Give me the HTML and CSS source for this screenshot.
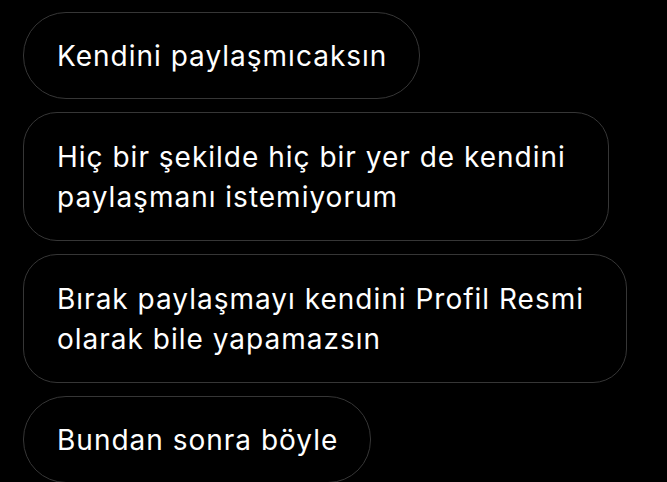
FILE: index.html
```html
<!DOCTYPE html>
<html lang="tr">
<head>
<meta charset="utf-8">
<link rel="stylesheet" href="styles.css">
</head>
<body>
<div class="thread">
  <div class="bubble pill">Kendini paylaşmıcaksın</div>
  <div class="bubble multi">Hiç bir şekilde hiç bir yer de kendini<br>paylaşmanı istemiyorum</div>
  <div class="bubble multi">Bırak paylaşmayı kendini Profil Resmi<br>olarak bile yapamazsın</div>
  <div class="bubble pill">Bundan sonra böyle</div>
</div>
</body>
</html>
```
FILE: styles.css
```css
html, body {
  margin: 0;
  padding: 0;
  background: #000;
}
body {
  width: 667px;
  height: 482px;
  overflow: hidden;
}
.thread {
  display: flex;
  flex-direction: column;
  align-items: flex-start;
  gap: 13px;
  padding: 12px 0 0 23px;
}
.bubble {
  box-sizing: border-box;
  font-family: Inter, "Noto Sans", sans-serif;
  font-size: 28px;
  line-height: 40px;
  letter-spacing: 1px;
  color: #fff;
  border: 1.5px solid #363636;
  padding: 22.5px 32px 22.5px 33px;
  white-space: nowrap;
}
.pill {
  border-radius: 43px;
}
.multi {
  border-radius: 34px;
  padding-top: 23.5px;
  padding-bottom: 23.5px;
  padding-right: 42px;
}
```
